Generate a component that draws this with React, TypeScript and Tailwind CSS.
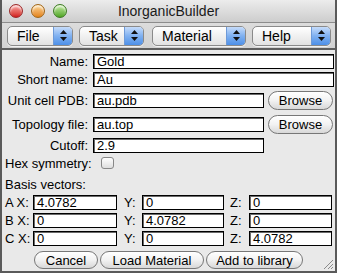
import React from 'react';

const Popup: React.FC<{ label: string; width: string; className?: string }> = ({ label, width, className = '' }) => (
    <div className={`${width} h-[20px] flex rounded-[5px] border border-[#8a8a8a] bg-gradient-to-b from-white to-[#e2e2e2] shadow-[0_1px_0_#f2f2f2] overflow-hidden ${className}`}>
        <div className="flex-1 pl-[9px] text-[14px] leading-[19px] text-black">{label}</div>
        <div className="w-[19px] flex flex-col items-center justify-center gap-[3px] border-l border-[#6e9ad8] bg-gradient-to-b from-[#c6dcfa] via-[#7fb0f0] to-[#4e90e8]">
            <svg width="7" height="4" viewBox="0 0 7 4"><path d="M3.5 0 L7 4 L0 4 Z" fill="#111" /></svg>
            <svg width="7" height="4" viewBox="0 0 7 4"><path d="M0 0 L7 0 L3.5 4 Z" fill="#111" /></svg>
        </div>
    </div>
);

const Field: React.FC<{ value: string; className?: string }> = ({ value, className = '' }) => (
    <div className={`h-[15px] border border-black bg-white shadow-[inset_1px_1px_0_#6a6a6a] pl-[3px] text-[13px] leading-[13px] text-black ${className}`}>
        {value}
    </div>
);

const Pill: React.FC<{ label: string; className?: string }> = ({ label, className = '' }) => (
    <div className={`flex items-center justify-center rounded-full border border-[#777] bg-gradient-to-b from-white via-[#f2f2f2] to-[#d8d8d8] text-[13px] leading-[15px] text-black ${className}`}>
        {label}
    </div>
);

const Light: React.FC<{ from: string; to: string; ring: string }> = ({ from, to, ring }) => (
    <div className={`w-[14px] h-[14px] rounded-full border ${ring} bg-gradient-to-b ${from} ${to} shadow-[inset_0_2px_2px_rgba(255,255,255,0.7)]`} />
);

const FormRow: React.FC<{ label: string; children: React.ReactNode; className?: string }> = ({ label, children, className = '' }) => (
    <div className={`flex items-center ${className}`}>
        <div className="w-[87px] pr-[1px] text-right text-[13px] leading-[15px] text-black">{label}</div>
        <div className="flex-1 flex items-center pl-[4px]">{children}</div>
    </div>
);

const VectorRow: React.FC<{ name: string; x: string; y: string; z: string; className?: string }> = ({ name, x, y, z, className = '' }) => (
    <div className={`flex items-center text-[13px] leading-[15px] text-black ${className}`}>
        <span className="w-[31px] pl-[3px]">{name} X:</span>
        <Field value={x} className="w-[84px]" />
        <span className="w-[25px] pl-[7px]">Y:</span>
        <Field value={y} className="w-[82px]" />
        <span className="w-[25px] pl-[6px]">Z:</span>
        <Field value={z} className="w-[83px]" />
    </div>
);

const App: React.FC = () => {
    return (
        <div className="w-[337px] h-[273px] flex flex-col overflow-hidden border-x-2 border-b-2 border-[#5a5a5a] bg-[#e9e9e9] font-['Liberation_Sans',Arial,sans-serif] relative">
            {/* title bar */}
            <div className="h-[23px] grid grid-cols-[1fr_auto_1fr] items-center bg-gradient-to-b from-[#ececec] to-[#cdcdcd] border-b border-[#8c8c8c]">
                <div className="flex items-center gap-[8px] pl-[7px]">
                    <Light from="from-[#f8a0a0]" to="to-[#d1161b]" ring="border-[#9a2a2a]" />
                    <Light from="from-[#fbd58f]" to="to-[#e2820e]" ring="border-[#a0661a]" />
                    <Light from="from-[#c4eca0]" to="to-[#4ea51e]" ring="border-[#3d7a25]" />
                </div>
                <div className="text-[14px] leading-[16px] text-[#1a1a1a]">InorganicBuilder</div>
                <div />
            </div>

            {/* toolbar */}
            <div className="h-[27px] flex items-center gap-[6px] pl-[5px] bg-gradient-to-b from-[#dcdcdc] to-[#d2d2d2] border-b-2 border-[#5e5e5e]">
                <Popup label="File" width="w-[66px]" />
                <Popup label="Task" width="w-[65px]" />
                <Popup label="Material" width="w-[94px]" className="ml-[2px]" />
                <Popup label="Help" width="w-[79px]" />
            </div>

            {/* form */}
            <div className="flex-1 flex flex-col pr-[1px]">
                <FormRow label="Name:" className="mt-[4px]">
                    <Field value="Gold" className="flex-1" />
                </FormRow>
                <FormRow label="Short name:" className="mt-[3px]">
                    <Field value="Au" className="flex-1" />
                </FormRow>
                <FormRow label="Unit cell PDB:" className="mt-[4px]">
                    <Field value="au.pdb" className="w-[171px]" />
                    <Pill label="Browse" className="ml-[4px] w-[65px] h-[19px]" />
                </FormRow>
                <FormRow label="Topology file:" className="mt-[5px]">
                    <Field value="au.top" className="w-[171px]" />
                    <Pill label="Browse" className="ml-[4px] w-[65px] h-[19px]" />
                </FormRow>
                <FormRow label="Cutoff:" className="mt-[4px]">
                    <Field value="2.9" className="w-[171px]" />
                </FormRow>
                <div className="flex items-center mt-[3px] h-[14px]">
                    <span className="pl-[3px] text-[13px] leading-[15px] text-black">Hex symmetry:</span>
                    <div className="ml-[9px] w-[13px] h-[12px] rounded-[3px] border border-[#888] bg-gradient-to-b from-white to-[#dedede]" />
                </div>
                <div className="mt-[7px] pl-[3px] text-[13px] leading-[15px] text-black">Basis vectors:</div>
                <VectorRow name="A" x="4.0782" y="0" z="0" className="mt-[3px]" />
                <VectorRow name="B" x="0" y="4.0782" z="0" className="mt-[3px]" />
                <VectorRow name="C" x="0" y="0" z="4.0782" className="mt-[3px]" />
                <div className="flex mt-[5px] pl-[32px] gap-[2px]">
                    <Pill label="Cancel" className="w-[64px] h-[18px]" />
                    <Pill label="Load Material" className="w-[104px] h-[18px]" />
                    <Pill label="Add to library" className="w-[97px] h-[18px]" />
                </div>
            </div>

            {/* resize grip */}
            <svg className="absolute right-[1px] bottom-[1px]" width="13" height="13" viewBox="0 0 13 13">
                <path d="M12 3 L3 12 M12 7 L7 12 M12 10 L10 12" stroke="#8a8a8a" strokeWidth="1" />
            </svg>
        </div>
    );
};

export default App;
